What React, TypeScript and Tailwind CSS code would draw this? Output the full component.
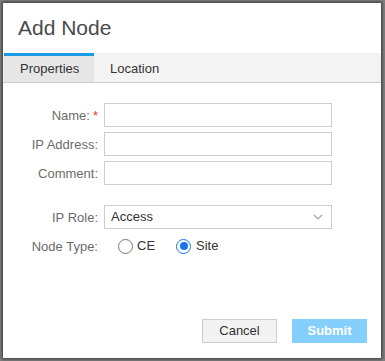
import React from "react";

const font = { fontFamily: '"Liberation Sans", Arial, sans-serif' };

function Row({ label, required, children }: { label: string; required?: boolean; children: React.ReactNode }) {
  return (
    <div className="flex items-center h-[24px]">
      <div className="w-[96px] pr-[1px] text-right text-[13px] text-[#6b6b6b] leading-none whitespace-nowrap">
        {label}
        {required && <span className="text-[#e53935] ml-[3px]">*</span>}
      </div>
      <div className="ml-[5px]">{children}</div>
    </div>
  );
}

function Input() {
  return <div className="w-[228px] h-[24px] border border-[#cccccc] bg-white" />;
}

function Radio({ checked }: { checked?: boolean }) {
  return checked ? (
    <div className="w-[15px] h-[15px] rounded-full border-[1.5px] border-[#1a73e8] flex items-center justify-center bg-white">
      <div className="w-[8px] h-[8px] rounded-full bg-[#1a73e8]" />
    </div>
  ) : (
    <div className="w-[15px] h-[15px] rounded-full border border-[#767676] bg-white" />
  );
}

export default function App() {
  return (
    <div className="w-[385px] h-[361px] bg-[#7f7f7f] pt-[3px] pl-[3px] overflow-hidden" style={font}>
      <div className="w-[378px] h-[355px] bg-white flex flex-col shadow-[0_0_3px_1px_rgba(0,0,0,0.6)]">
        <div className="h-[50px] pl-[15px] pt-[13px]">
          <div className="text-[21px] leading-[24px] text-[#4a4a4a]">Add Node</div>
        </div>
        <div className="flex h-[30px] bg-[#f3f3f3] border-b border-[#cccccc]">
          <div className="ml-[1px] w-[90px] bg-[#e6e6e6] border-t-[3px] border-[#1a9be6] flex items-center pl-[16px] text-[13px] text-[#333] pb-[1px]">
            Properties
          </div>
          <div className="flex items-center pl-[16px] text-[13px] text-[#333] pt-[2px]">Location</div>
        </div>
        <div className="pt-[20px] flex flex-col gap-[5px]">
          <Row label="Name:" required>
            <Input />
          </Row>
          <Row label="IP Address:">
            <Input />
          </Row>
          <Row label="Comment:">
            <Input />
          </Row>
        </div>
        <div className="pt-[20px] flex flex-col gap-[5px]">
          <Row label="IP Role:">
            <div className="w-[228px] h-[24px] border border-[#cccccc] bg-white flex items-center justify-between pl-[6px] pr-[8px]">
              <span className="text-[13px] text-[#333]">Access</span>
              <svg width="10" height="6" viewBox="0 0 10 6" fill="none">
                <path d="M1 1L5 5L9 1" stroke="#a0a0a0" strokeWidth="1.2" />
              </svg>
            </div>
          </Row>
          <Row label="Node Type:">
            <div className="flex items-center pl-[14px] text-[13px] text-[#333]">
              <Radio />
              <span className="ml-[4px]">CE</span>
              <div className="ml-[21px]">
                <Radio checked />
              </div>
              <span className="ml-[5px]">Site</span>
            </div>
          </Row>
        </div>
        <div className="flex-1" />
        <div className="flex justify-end gap-[15px] pr-[14px] pb-[15px]">
          <button className="w-[75px] h-[24px] bg-[#f2f2f2] border border-[#cccccc] text-[13px] text-[#333]">
            Cancel
          </button>
          <button className="w-[75px] h-[24px] bg-[#84cffb] text-[13px] text-white font-bold">Submit</button>
        </div>
      </div>
    </div>
  );
}
